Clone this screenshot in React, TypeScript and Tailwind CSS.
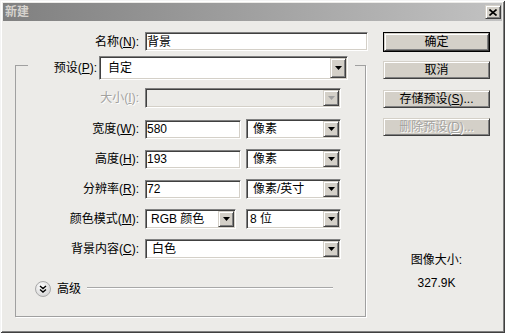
import React from "react";

const sunken =
  "border border-t-[#808080] border-l-[#808080] border-b-white border-r-white shadow-[inset_1px_1px_0_#404040,inset_-1px_-1px_0_#d4d0c8] p-[1px]";
const raised =
  "border border-t-[#d4d0c8] border-l-[#d4d0c8] border-b-[#404040] border-r-[#404040] shadow-[inset_1px_1px_0_#fff,inset_-1px_-1px_0_#808080] bg-[#d4d0c8]";
const disabledText = "text-[#a3a29f] [text-shadow:1px_1px_0_#fff]";

function DropBtn({ disabled }: { disabled?: boolean }) {
  return (
    <div className={`${raised} w-[16px] h-full flex items-center justify-center shrink-0`}>
      <svg width="7" height="4" viewBox="0 0 7 4">
        <polygon points="0,0 7,0 3.5,4" fill={disabled ? "#a0a0a0" : "#000"} />
      </svg>
    </div>
  );
}

function Select({
  className,
  text,
  disabled,
  pad,
}: {
  className: string;
  text?: React.ReactNode;
  disabled?: boolean;
  pad: string;
}) {
  return (
    <div className={`${className} ${sunken} flex items-stretch ${disabled ? "bg-[#ecebe8]" : "bg-white"}`}>
      <div className={`flex-1 flex items-center ${pad} whitespace-nowrap overflow-hidden leading-none`}>{text}</div>
      <DropBtn disabled={disabled} />
    </div>
  );
}

function Input({ className, text }: { className: string; text: string }) {
  return (
    <div className={`${className} ${sunken} bg-white flex items-center pl-[1px] leading-none whitespace-nowrap`}>
      {text}
    </div>
  );
}

function Btn({
  children,
  def,
  disabled,
  className,
}: {
  children: React.ReactNode;
  def?: boolean;
  disabled?: boolean;
  className: string;
}) {
  const inner = (
    <div className={`${raised} w-full h-full flex items-center justify-center leading-none ${disabled ? disabledText : ""}`}>
      {children}
    </div>
  );
  if (def) {
    return <div className={`${className} border border-black`}>{inner}</div>;
  }
  return <div className={className}>{inner}</div>;
}

function Label({ children, className }: { children: React.ReactNode; className: string }) {
  return <div className={`${className} text-right whitespace-nowrap leading-none`}>{children}</div>;
}

export default function App() {
  return (
    <div className="w-[505px] h-[333px] bg-[#ecebe8] flex flex-col text-[12px] text-black font-['Liberation_Sans','Noto_Sans_CJK_SC',sans-serif] shadow-[inset_1px_1px_0_#f4f4f4,inset_-1px_-1px_0_#404040,inset_2px_2px_0_#ffffff,inset_-2px_-2px_0_#808080]">
      {/* title bar */}
      <div className="mx-[3px] mt-[3px] h-[18px] bg-linear-to-r from-[#808080] to-[#c2c2c2] flex items-center justify-between pl-[2px] pr-[1px]">
        <span className="font-bold text-[#d6d3ce] leading-none">新建</span>
        <div className={`${raised} w-[16px] h-[14px] flex items-center justify-center`}>
          <svg width="8" height="7" viewBox="0 0 8 7">
            <path d="M0.5 0.5 L7.5 6.5 M7.5 0.5 L0.5 6.5" stroke="#000" strokeWidth="1.6" />
          </svg>
        </div>
      </div>

      {/* body */}
      <div className="flex flex-1">
        {/* left column */}
        <div className="w-[372px] flex flex-col">
          <div className="mt-[11px] flex items-center h-[19px]">
            <Label className="w-[139px]">
              名称(<u>N</u>):
            </Label>
            <Input className="ml-[6px] w-[223px] h-[19px]" text="背景" />
          </div>

          <div className="mt-[14px] ml-[15px] w-[351px] h-[252px] border border-[#a0a0a0] shadow-[1px_1px_0_#fff] flex flex-col">
            {/* preset row (legend) */}
            <div className="-mt-[10px] ml-[12px] w-[327px] h-[24px] bg-[#ecebe8] flex items-center">
              <Label className="w-[71px] pr-[2px]">
                预设(<u>P</u>):
              </Label>
              <Select className="w-[249px] h-[24px]" text="自定" pad="pl-[7px]" />
            </div>

            <div className="mt-[8px] flex items-center h-[20px]">
              <Label className={`w-[123px] ${disabledText}`}>
                大小(<u>I</u>):
              </Label>
              <Select className="ml-[6px] w-[196px] h-[20px]" disabled pad="pl-[5px]" />
            </div>

            <div className="mt-[11px] flex items-center h-[20px]">
              <Label className="w-[123px]">
                宽度(<u>W</u>):
              </Label>
              <Input className="ml-[6px] w-[96px] h-[19px]" text="580" />
              <Select className="ml-[5px] w-[95px] h-[20px]" text="像素" pad="pl-[5px]" />
            </div>

            <div className="mt-[10px] flex items-center h-[20px]">
              <Label className="w-[123px]">
                高度(<u>H</u>):
              </Label>
              <Input className="ml-[6px] w-[96px] h-[19px]" text="193" />
              <Select className="ml-[5px] w-[95px] h-[20px]" text="像素" pad="pl-[5px]" />
            </div>

            <div className="mt-[10px] flex items-center h-[20px]">
              <Label className="w-[123px]">
                分辨率(<u>R</u>):
              </Label>
              <Input className="ml-[6px] w-[96px] h-[19px]" text="72" />
              <Select className="ml-[5px] w-[95px] h-[20px]" text="像素/英寸" pad="pl-[5px]" />
            </div>

            <div className="mt-[10px] flex items-center h-[20px]">
              <Label className="w-[123px]">
                颜色模式(<u>M</u>):
              </Label>
              <Select className="ml-[6px] w-[91px] h-[20px]" text="RGB 颜色" pad="pl-[4px]" />
              <Select className="ml-[10px] w-[95px] h-[20px]" text="8 位" pad="pl-[2px]" />
            </div>

            <div className="mt-[10px] flex items-center h-[20px]">
              <Label className="w-[123px]">
                背景内容(<u>C</u>):
              </Label>
              <Select className="ml-[6px] w-[196px] h-[20px]" text="白色" pad="pl-[5px]" />
            </div>

            <div className="mt-[22px] ml-[19px] flex items-center h-[16px]">
              <svg width="16" height="16" viewBox="0 0 16 16" className="shrink-0">
                <defs>
                  <radialGradient id="g" cx="0.4" cy="0.35" r="0.7">
                    <stop offset="0" stopColor="#ffffff" />
                    <stop offset="1" stopColor="#d2d2d2" />
                  </radialGradient>
                </defs>
                <circle cx="8" cy="8" r="7.5" fill="url(#g)" stroke="#a8a8a8" />
                <path d="M5 5 L8 7.5 L11 5 M5 8.5 L8 11 L11 8.5" stroke="#000" strokeWidth="1.4" fill="none" />
              </svg>
              <span className="ml-[6px] leading-none">高级</span>
              <div className="ml-[6px] -mt-[3px] w-[246px] h-[1px] bg-[#a8a8a8] shadow-[0_1px_0_#fff]" />
            </div>
          </div>
        </div>

        {/* right column */}
        <div className="ml-[11px] w-[107px] flex flex-col">
          <Btn def className="mt-[11px] h-[20px]">
            确定
          </Btn>
          <Btn className="mt-[9px] h-[18px]">取消</Btn>
          <Btn className="mt-[11px] h-[18px]">
            存储预设(<u>S</u>)...
          </Btn>
          <Btn disabled className="mt-[10px] h-[18px]">
            删除预设(<u>D</u>)...
          </Btn>
          <div className="mt-[117px] text-center leading-[14px]">图像大小:</div>
          <div className="mt-[9px] text-center leading-[14px]">327.9K</div>
        </div>
      </div>
    </div>
  );
}
